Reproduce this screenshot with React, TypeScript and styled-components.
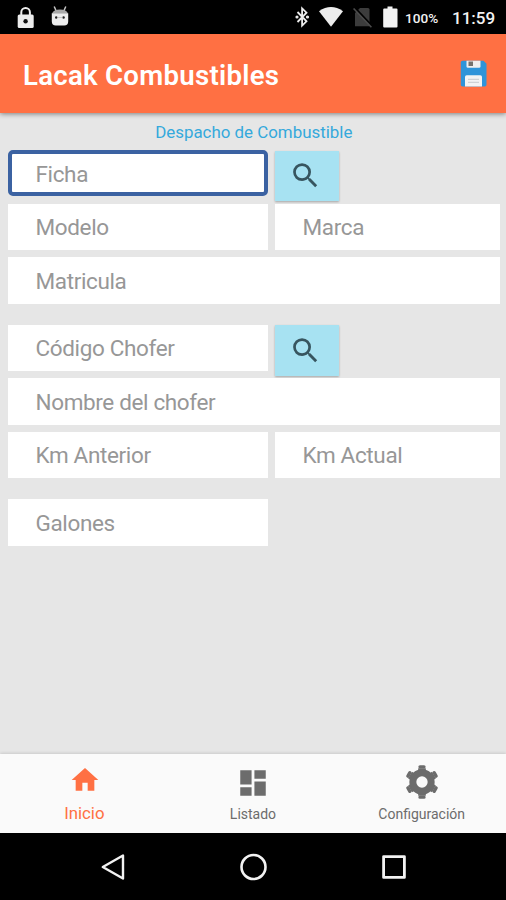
import React from "react";
import styled, { createGlobalStyle } from "styled-components";

const GlobalStyle = createGlobalStyle`
  * { box-sizing: border-box; }
  body { margin: 0; background: #000; font-family: Roboto, sans-serif; }
`;

const Screen = styled.div`
  width: 506px;
  height: 900px;
  display: flex;
  flex-direction: column;
  overflow: hidden;
  background: #e6e6e6;
`;

const StatusBar = styled.header`
  height: 34px;
  flex: none;
  display: flex;
  align-items: center;
  background: #000;
  color: #f2f2f2;
  padding: 0 11px 0 17px;
`;

const StatusGroup = styled.div<{ $end?: boolean }>`
  display: flex;
  align-items: center;
  margin-left: ${(p) => (p.$end ? "auto" : "0")};
`;

const Glyph = styled.svg<{ $w: number; $h?: number; $ml?: number; $mt?: number }>`
  display: block;
  flex: none;
  width: ${(p) => p.$w}px;
  height: ${(p) => p.$h ?? p.$w}px;
  margin-left: ${(p) => p.$ml ?? 0}px;
  margin-top: ${(p) => p.$mt ?? 0}px;
`;

const Battery = styled.span`
  width: 34px;
  margin: 2px 0 0 7.5px;
  font-size: 13.6px;
  line-height: 16px;
  font-weight: 500;
  white-space: nowrap;
`;

const Clock = styled.span`
  width: 43px;
  margin: 2px 0 0 13px;
  font-size: 17px;
  line-height: 20px;
  font-weight: 500;
  white-space: nowrap;
`;

const AppBar = styled.div`
  height: 78.7px;
  flex: none;
  display: flex;
  align-items: center;
  justify-content: space-between;
  padding: 4px 19.5px 0 23px;
  background: #ff7043;
  box-shadow: 0 1px 5px rgba(0, 0, 0, 0.45);
  z-index: 1;
`;

const Title = styled.h1`
  margin: 1.5px 0 0;
  color: #fff;
  font-size: 27.6px;
  letter-spacing: 0.28px;
  line-height: 32px;
  font-weight: 600;
  white-space: nowrap;
`;

const Form = styled.main`
  flex: 1;
  min-height: 0;
  padding: 9px 6px 0 7.5px;
`;

const Heading = styled.h2`
  margin: 0 0 8.7px;
  height: 20px;
  color: #35a9dc;
  font-size: 16.9px;
  line-height: 20px;
  font-weight: 400;
  text-align: center;
  white-space: nowrap;
`;

const Row = styled.div<{ $gapAfter?: boolean }>`
  display: grid;
  grid-template-columns: 260px 225.5px;
  column-gap: 7px;
  height: 46.5px;
  margin-bottom: ${(p) => (p.$gapAfter ? 21 : 7)}px;
`;

const Field = styled.input<{ $wide?: boolean }>`
  grid-column: ${(p) => (p.$wide ? "1 / -1" : "auto")};
  width: 100%;
  height: 46.5px;
  margin: 0;
  border: 0;
  outline: 0;
  border-radius: 0;
  padding: 0.6px 0 0 28px;
  background: #fff;
  color: #444;
  font: 400 22.5px Roboto, sans-serif;
  letter-spacing: -0.36px;
  &::placeholder { color: #979797; opacity: 1; }
`;

const ActiveField = styled(Field)`
  height: 46px;
  border: 4px solid #3b62a2;
  border-radius: 5px;
  padding: 1px 0 0 24px;
`;

const SearchButton = styled.button`
  width: 64px;
  height: 50.5px;
  margin: 0.5px 0 0;
  padding: 0 0 0 14.500px;
  border: 0;
  background: #a7e2f2;
  box-shadow: 0 1px 2px rgba(0, 0, 0, 0.28);
  display: flex;
  align-items: center;
`;

const TabBar = styled.nav`
  height: 79px;
  flex: none;
  display: grid;
  grid-template-columns: repeat(3, 1fr);
  background: #fafafa;
  box-shadow: 0 -1px 3px rgba(0, 0, 0, 0.13);
  z-index: 1;
`;

const Tab = styled.div<{ $active?: boolean }>`
  display: flex;
  flex-direction: column;
  align-items: center;
  color: ${(p) => (p.$active ? "#ff7043" : "#6c6c6c")};
`;

const IconSlot = styled.div`
  height: 49px;
  display: flex;
  align-items: center;
  padding-top: 7px;
`;

const TabLabel = styled.span<{ $active?: boolean }>`
  font-size: ${(p) => (p.$active ? 16.8 : 14)}px;
  line-height: ${(p) => (p.$active ? 20 : 22)}px;
  white-space: nowrap;
`;

const SystemNav = styled.footer`
  height: 67px;
  flex: none;
  display: flex;
  justify-content: center;
  align-items: center;
  gap: 112.5px;
  background: #000;
`;

const Search = () => (
  <Glyph $w={33} $mt={-0.5} viewBox="0 0 24 24" fill="#37555f">
    <path d="M15.5 14h-.79l-.28-.27A6.471 6.471 0 0 0 16 9.5 6.5 6.5 0 1 0 9.5 16c1.61 0 3.09-.59 4.23-1.57l.27.28v.79l5 4.99L20.49 19l-4.99-5zm-6 0C7.01 14 5 11.99 5 9.5S7.01 5 9.5 5 14 7.01 14 9.5 11.99 14 9.5 14z" />
  </Glyph>
);

const Lock = () => (
  <Glyph $w={17} $h={23} viewBox="0 0 17 23">
    <path d="M4.3 10V6.2a4.3 4.3 0 0 1 8.6 0V10" fill="none" stroke="#ededed" strokeWidth="2" />
    <rect x=".7" y="8.5" width="16" height="13.5" rx="1.6" fill="#ededed" />
    <circle cx="8.6" cy="15.2" r="2.2" fill="#111" />
  </Glyph>
);

const Robot = () => (
  <Glyph $w={18} $h={22} $ml={17} $mt={-3} viewBox="0 0 18 22">
    <path d="M3.2 1.5l2 4.500M14.800 1.500l-2 4.500" stroke="#c4c4c4" strokeWidth="1.5" />
    <path d="M1 8.500Q2.500 4.600 9 4.600t8 3.900z" fill="#a9a9a9" />
    <path d="M.8 8.300h16.400v8.200q0 4-4 4H4.800q-4 0-4-4z" fill="#ededed" />
    <circle cx="5.2" cy="12.5" r="1.2" fill="#222" />
    <circle cx="12.6" cy="12.5" r="1.2" fill="#222" />
    <path d="M6.500 12.500h5" stroke="#b5b5b5" strokeWidth=".7" />
  </Glyph>
);

const Floppy = () => (
  <Glyph $w={27} $h={27} $mt={-4} viewBox="0 0 27 27">
    <path d="M2.500.7h21l3 3v21q0 1.700-1.700 1.700H2.500Q.8 26.400.8 24.700V2.400Q.8.7 2.500.7z" fill="#2f94d9" />
    <path d="M6.500.7h14v5.800q0 1.300-1.300 1.300H7.800q-1.300 0-1.300-1.300z" fill="#f0eeee" />
    <rect x="8.5" y="1.5" width="4.5" height="4.5" fill="#75716d" />
    <path d="M5 17q0-1.700 1.700-1.700h13.600Q22 15.300 22 17v9.400H5z" fill="#f3f3f3" />
    <path d="M8 19.300h11M8 22.300h11" stroke="#cfd2d5" strokeWidth="1.2" />
  </Glyph>
);

const App = () => (
  <>
    <GlobalStyle />
    <Screen>
      <StatusBar>
        <StatusGroup>
          <Lock />
          <Robot />
        </StatusGroup>
        <StatusGroup $end>
          <Glyph $w={16} $h={22} viewBox="0 0 16 22" fill="none" stroke="#ededed" strokeWidth="1.8">
            <path d="M3.500 6l9 9.300-4.400 4.400V2.300l4.400 4.400L3.500 16" />
            <circle cx="3" cy="11" r=".7" fill="#ededed" />
            <circle cx="13.5" cy="11" r=".7" fill="#ededed" />
          </Glyph>
          <Glyph $w={26} $h={22} $ml={8} viewBox="0 0 26 22">
            <path d="M1 5.200Q13-3 25 5.200L13 20.800z" fill="#ededed" />
          </Glyph>
          <Glyph $w={20} $h={22} $ml={9} viewBox="0 0 20 22">
            <path d="M7 2h8q1.500 0 1.500 1.500v16.800H2V7z" fill="#3c3c3c" />
            <path d="M2 2l17.500 18.500" stroke="#000" strokeWidth="2" />
            <path d="M.6 2.500l17.800 18.700" stroke="#4c4c4c" strokeWidth="1.6" />
          </Glyph>
          <Glyph $w={15} $h={22} $ml={10} viewBox="0 0 15 22">
            <path d="M4.500.5h5v2h4q1 0 1 1v17q0 1-1 1H1.200q-1 0-1-1v-17q0-1 1-1h3.300z" fill="#f2f2f2" />
          </Glyph>
          <Battery>100%</Battery>
          <Clock>11:59</Clock>
        </StatusGroup>
      </StatusBar>
      <AppBar>
        <Title>Lacak Combustibles</Title>
        <Floppy />
      </AppBar>
      <Form>
        <Heading>Despacho de Combustible</Heading>
        <Row>
          <ActiveField placeholder="Ficha" />
          <SearchButton aria-label="Buscar ficha"><Search /></SearchButton>
        </Row>
        <Row>
          <Field placeholder="Modelo" />
          <Field placeholder="Marca" />
        </Row>
        <Row $gapAfter>
          <Field $wide placeholder="Matricula" />
        </Row>
        <Row>
          <Field placeholder="Código Chofer" />
          <SearchButton aria-label="Buscar chofer"><Search /></SearchButton>
        </Row>
        <Row>
          <Field $wide placeholder="Nombre del chofer" />
        </Row>
        <Row $gapAfter>
          <Field placeholder="Km Anterior" />
          <Field placeholder="Km Actual" />
        </Row>
        <Row>
          <Field placeholder="Galones" />
        </Row>
      </Form>
      <TabBar>
        <Tab $active>
          <IconSlot>
            <Glyph $w={32} $mt={-5} $ml={1} viewBox="0 0 24 24" fill="currentColor">
              <path d="M10 20v-6h4v6h5v-8h3L12 3 2 12h3v8z" />
            </Glyph>
          </IconSlot>
          <TabLabel $active>Inicio</TabLabel>
        </Tab>
        <Tab>
          <IconSlot>
            <Glyph $w={34} $ml={1} $mt={1} viewBox="0 0 24 24" fill="currentColor">
              <path d="M3 13h8V3H3v10zm0 8h8v-6H3v6zm10 0h8V11h-8v10zm0-18v6h8V3h-8z" />
            </Glyph>
          </IconSlot>
          <TabLabel>Listado</TabLabel>
        </Tab>
        <Tab>
          <IconSlot>
            <Glyph $w={40} viewBox="0 0 24 24" fill="none" stroke="currentColor">
              <circle cx="12" cy="12" r="5.5" strokeWidth="4.2" />
              <path
                d="M12 5V3.700M12 19v1.300M18.060 8.500l1.130-.65M5.940 15.500l-1.130.65M18.060 15.500l1.130.65M5.940 8.500l-1.130-.65"
                strokeWidth="4.6"
              />
              <path
                d="M10.800 2.900h2.400M10.800 21.100h2.400M19.280 6.410l1.200 2.080M3.520 15.510l1.200 2.080M20.480 15.510l-1.200 2.080M4.720 6.410l-1.200 2.080"
                strokeWidth="2"
                strokeLinecap="round"
              />
            </Glyph>
          </IconSlot>
          <TabLabel>Configuración</TabLabel>
        </Tab>
      </TabBar>
      <SystemNav>
        <Glyph $w={28} $h={28} viewBox="0 0 28 28" fill="none" stroke="#f2f2f2" strokeWidth="2.4" strokeLinejoin="round">
          <path d="M24 2.500v23L3.800 14z" />
        </Glyph>
        <Glyph $w={28} $h={28} viewBox="0 0 28 28" fill="none" stroke="#f2f2f2" strokeWidth="2.6">
          <circle cx="14.5" cy="14" r="12" />
        </Glyph>
        <Glyph $w={28} $h={28} viewBox="0 0 28 28" fill="none" stroke="#f2f2f2" strokeWidth="2.8" strokeLinejoin="round">
          <rect x="3.6" y="3.6" width="20.8" height="20.8" />
        </Glyph>
      </SystemNav>
    </Screen>
  </>
);

export default App;
